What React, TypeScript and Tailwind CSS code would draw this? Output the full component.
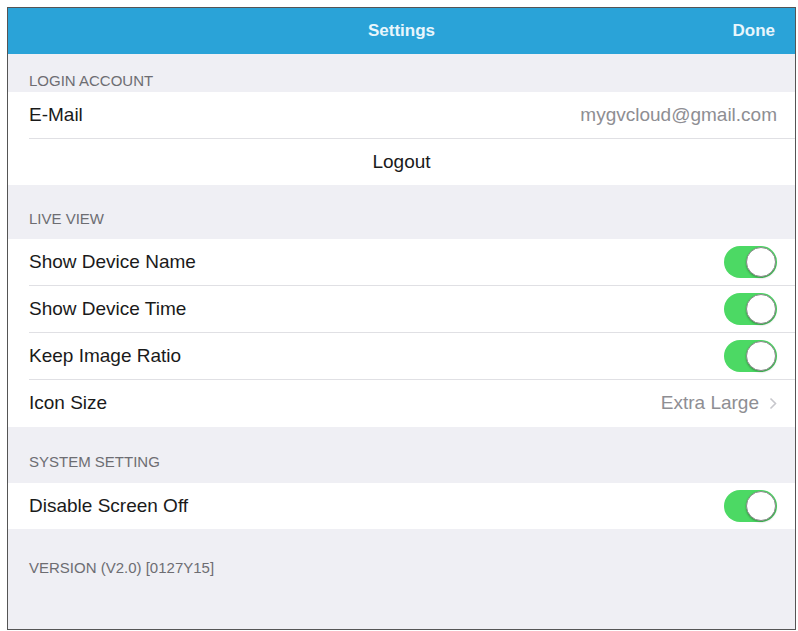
import React from "react";

const font = { fontFamily: '"Liberation Sans", Arial, Helvetica, sans-serif' };

function Toggle() {
  return (
    <div className="relative h-[32px] w-[53px] rounded-full bg-[#4cd964]">
      <div className="absolute right-[1px] top-[1px] h-[30px] w-[30px] rounded-full border border-[#8a8a8a] bg-white shadow-[0_1px_2px_rgba(0,0,0,0.3)]" />
    </div>
  );
}

function SectionLabel({ text, className }: { text: string; className: string }) {
  return (
    <div className={`flex items-end bg-[#efeff4] pl-[21px] text-[15px] uppercase text-[#6d6d72] ${className}`}>
      {text}
    </div>
  );
}

function Row({
  label,
  right,
  last,
}: {
  label: string;
  right?: React.ReactNode;
  last?: boolean;
}) {
  return (
    <div className="bg-white pl-[21px]">
      <div
        className={`flex h-[47px] items-center justify-between pr-[18px] ${
          last ? "" : "border-b border-[#e0e0e4]"
        }`}
      >
        <span className="text-[19px] text-[#1a1a1a]">{label}</span>
        {right}
      </div>
    </div>
  );
}

export default function App() {
  return (
    <div className="h-[631px] w-[798px] bg-white pl-[7px] pt-[7px]" style={font}>
      <div className="flex h-[623px] w-[789px] flex-col overflow-hidden border border-[#555] bg-[#efeff4]">
        {/* navigation bar */}
        <div className="relative flex h-[46px] shrink-0 items-center justify-center bg-[#2aa3d8]">
          <span className="text-[17px] font-semibold text-[#e8f6fc]">Settings</span>
          <span className="absolute right-[20px] text-[17px] font-semibold text-[#e8f6fc]">Done</span>
        </div>

        <SectionLabel text="Login Account" className="h-[38px] items-center" />
        <Row
          label="E-Mail"
          right={<span className="text-[19px] text-[#8e8e93]">mygvcloud@gmail.com</span>}
        />
        <div className="flex h-[46px] items-center justify-center bg-white">
          <span className="text-[19px] text-[#1a1a1a]">Logout</span>
        </div>

        <SectionLabel text="Live View" className="h-[54px] pb-[9px]" />
        <Row label="Show Device Name" right={<Toggle />} />
        <Row label="Show Device Time" right={<Toggle />} />
        <Row label="Keep Image Ratio" right={<Toggle />} />
        <Row
          label="Icon Size"
          last
          right={
            <span className="flex items-center gap-[10px] text-[19px] text-[#8e8e93]">
              Extra Large
              <svg width="8" height="13" viewBox="0 0 8 13">
                <path d="M1.5 1.5l5 5-5 5" fill="none" stroke="#c7c7cc" strokeWidth="1.6" />
              </svg>
            </span>
          }
        />

        <SectionLabel text="System Setting" className="h-[56px] pb-[10px]" />
        <div className="bg-white pl-[21px]">
          <div className="flex h-[46px] items-center justify-between pr-[18px]">
            <span className="text-[19px] text-[#1a1a1a]">Disable Screen Off</span>
            <Toggle />
          </div>
        </div>

        <div className="pl-[21px] pt-[28px] text-[15px] text-[#6d6d72]">VERSION (V2.0) [0127Y15]</div>
      </div>
    </div>
  );
}
